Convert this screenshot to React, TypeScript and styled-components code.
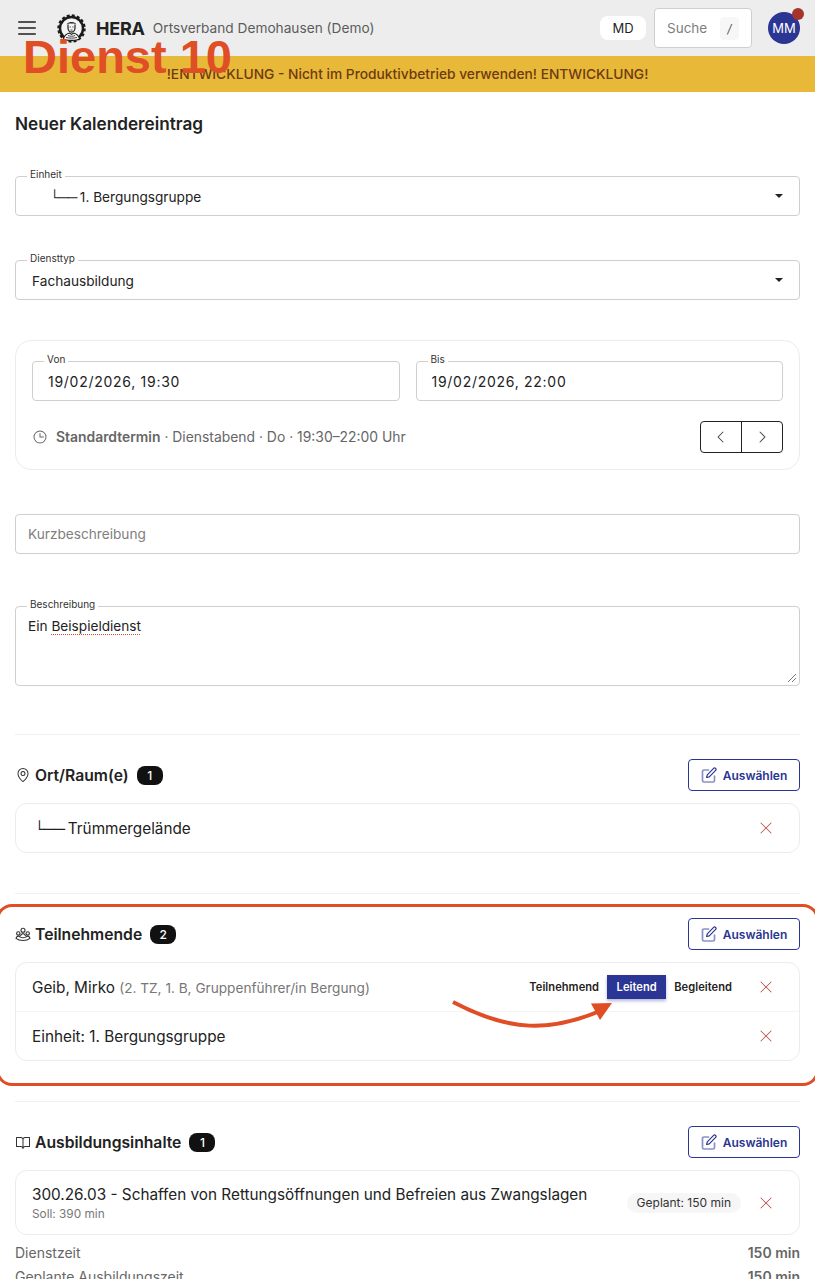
import React from "react";
import styled, { createGlobalStyle } from "styled-components";
import { PiList, PiClock, PiCaretLeft, PiCaretRight, PiMapPin, PiBookOpen, PiXLight } from "react-icons/pi";

const Global = createGlobalStyle`
  html, body { margin: 0; padding: 0; background: #fff; }
  body { font-family: Inter, "Liberation Sans", sans-serif; color: #1f1f1f; overflow: hidden; -webkit-font-smoothing: antialiased; }
  * { box-sizing: border-box; }
`;

const Page = styled.div`
  position: relative;
  width: 815px;
  height: 1279px;
  overflow: hidden;
`;
const Header = styled.header`
  height: 56px;
  background: #ededed;
  display: flex;
  align-items: center;
  padding: 0 15px;
`;
const MenuButton = styled.div`
  width: 24px;
  height: 24px;
  display: flex;
  color: #1f1f1f;
  margin-right: 18px;
`;
const Brand = styled.div`
  font-size: 18px;
  font-weight: 700;
  color: #222;
  margin-left: 10px;
  letter-spacing: -0.2px;
`;
const OrgName = styled.div`
  font-size: 13.7px;
  color: #5c5c5c;
  margin-left: 8px;
  flex: 1;
`;
const ModePill = styled.div`
  width: 46px;
  height: 24px;
  background: #fff;
  border-radius: 8px;
  font-size: 13px;
  display: flex;
  align-items: center;
  justify-content: center;
  margin-right: 8px;
`;
const SearchBox = styled.div`
  width: 98px;
  height: 40px;
  background: #fff;
  border: 1px solid #cfcfcf;
  border-radius: 4px;
  display: flex;
  align-items: center;
  justify-content: space-between;
  padding: 0 12px;
  font-size: 13.5px;
  color: #808080;
  margin-right: 16px;
`;
const Kbd = styled.span`
  width: 19px;
  height: 23px;
  background: #f7f7f7;
  border-radius: 4px;
  display: flex;
  align-items: center;
  justify-content: center;
  font-size: 12px;
  font-style: italic;
  color: #555;
`;
const Avatar = styled.div`
  position: relative;
  width: 32px;
  height: 32px;
  border-radius: 50%;
  background: #2b3593;
  color: #fff;
  font-size: 13px;
  display: flex;
  align-items: center;
  justify-content: center;
`;
const AvatarDot = styled.span`
  position: absolute;
  top: -4px;
  right: -4px;
  width: 12px;
  height: 12px;
  border-radius: 50%;
  background: #a5352a;
`;
const Banner = styled.div`
  height: 36px;
  background: #e8b838;
  color: #6e3a12;
  font-size: 13.78px;
  font-weight: 500;
  display: flex;
  align-items: center;
  justify-content: center;
`;
const Main = styled.main`
  padding: 0 15px;
`;
const PageTitle = styled.h1`
  margin: 21px 0 0;
  height: 22px;
  line-height: 22px;
  font-size: 17.2px;
  font-weight: 600;
  color: #222;
`;
const Field = styled.div<{ $mt?: number; $h?: number }>`
  position: relative;
  flex: 1;
  margin-top: ${(p) => p.$mt ?? 0}px;
  height: ${(p) => p.$h ?? 40}px;
  border: 1px solid #cfcfcf;
  border-radius: 4px;
  background: #fff;
  display: flex;
  align-items: center;
  font-size: 13.65px;
  color: #222;
  padding: 0 12px;
`;
const FieldLabel = styled.label`
  position: absolute;
  top: -10px;
  left: 11px;
  background: #fff;
  padding: 0 3px;
  font-size: 10px;
  line-height: 14px;
  color: #333;
`;
const SelectValue = styled.span`
  flex: 1;
  padding: 1px 0 0 4px;
`;
const Branch = styled.span<{ $ml?: number }>`
  margin-left: ${(p) => p.$ml ?? 0}px;
  letter-spacing: -0.75px;
`;
const Caret = styled.span`
  width: 0;
  height: 0;
  border-left: 4px solid transparent;
  border-right: 4px solid transparent;
  border-top: 4px solid #222;
  margin-right: 4px;
`;
const Placeholder = styled.span`
  color: #808080;
`;
const DateCard = styled.section`
  margin-top: 40px;
  height: 130px;
  border: 1px solid #ececec;
  border-radius: 16px;
  padding: 20px 16px 0;
`;
const DateRow = styled.div`
  display: flex;
  gap: 16px;
`;
const DateValue = styled.span`
  font-size: 14px;
  letter-spacing: 0.72px;
  padding-left: 3px;
  color: #222;
`;
const HintRow = styled.div`
  display: flex;
  align-items: center;
  margin-top: 20px;
  height: 32px;
  font-size: 13.9px;
  color: #666;
`;
const HintIcon = styled.span`
  display: flex;
  margin-right: 8px;
  color: #666;
`;
const HintText = styled.span`
  flex: 1;
  b { font-weight: 600; }
`;
const StepGroup = styled.div`
  display: flex;
  width: 83px;
  height: 32px;
  border: 1px solid #222;
  border-radius: 4px;
`;
const StepButton = styled.div`
  flex: 1;
  display: flex;
  align-items: center;
  justify-content: center;
  color: #444;
  & + & { border-left: 1px solid #222; }
`;
const Spelled = styled.span`
  text-decoration: underline dotted #e0473a 1px;
  text-underline-offset: 3px;
`;
const TextAreaBody = styled.div`
  align-self: flex-start;
  padding-top: 11px;
`;
const Grip = styled.svg`
  position: absolute;
  right: 2px;
  bottom: 2px;
`;
const Divider = styled.hr<{ $mt: number }>`
  border: 0;
  border-top: 1px solid #f0f0f0;
  margin: ${(p) => p.$mt}px 0 0;
`;
const SectionHead = styled.div`
  display: flex;
  align-items: center;
  height: 32px;
  margin-top: 24px;
  margin-bottom: 12px;
`;
const SectionIcon = styled.span`
  display: flex;
  width: 20px;
  color: #333;
`;
const SectionTitle = styled.h2`
  margin: 0;
  font-size: 15.7px;
  font-weight: 600;
  color: #222;
`;
const Badge = styled.span`
  margin-left: 8px;
  width: 26px;
  height: 19px;
  border-radius: 8px;
  background: #111;
  color: #fff;
  font-size: 12px;
  font-weight: 500;
  display: flex;
  align-items: center;
  justify-content: center;
`;
const PickButton = styled.div`
  margin-left: auto;
  width: 112px;
  height: 32px;
  border: 1px solid #2b3593;
  border-radius: 4px;
  display: flex;
  align-items: center;
  justify-content: center;
  gap: 6px;
  color: #2b3593;
  font-size: 12px;
  font-weight: 600;
`;
const ListCard = styled.div`
  border: 1px solid #ececec;
  border-radius: 12px;
`;
const ListRow = styled.div<{ $h: number }>`
  display: flex;
  align-items: center;
  height: ${(p) => p.$h}px;
  padding: 0 24px 0 16px;
  font-size: 15.3px;
  color: #222;
  & + & { border-top: 1px solid #f4f4f4; }
`;
const RowText = styled.div`
  flex: 1;
  min-width: 0;
`;
const Muted = styled.span`
  font-size: 13.65px;
  color: #777;
`;
const Sub = styled.div`
  font-size: 11.8px;
  color: #777;
  margin-top: 3px;
`;
const Segments = styled.div`
  display: flex;
  gap: 8px;
  margin-right: 25px;
`;
const Segment = styled.span<{ $active?: boolean }>`
  height: 24px;
  display: flex;
  align-items: center;
  padding: 0 ${(p) => (p.$active ? 9.5 : 0)}px;
  font-size: 11.1px;
  font-weight: 600;
  letter-spacing: 0.05px;
  color: ${(p) => (p.$active ? "#fff" : "#222")};
  background: ${(p) => (p.$active ? "#2b3593" : "transparent")};
  box-shadow: ${(p) => (p.$active ? "0 2px 3px rgba(43,53,147,.35)" : "none")};
`;
const Planned = styled.span`
  height: 20px;
  padding: 0 10px;
  border-radius: 10px;
  background: #f6f6f6;
  font-size: 12px;
  color: #333;
  display: flex;
  align-items: center;
  margin-right: 16px;
`;
const Remove = styled.span`
  display: flex;
  color: #b5483f;
`;
const Stat = styled.div<{ $mt: number }>`
  display: flex;
  justify-content: space-between;
  font-size: 14px;
  line-height: 17px;
  color: #666;
  margin-top: ${(p) => p.$mt}px;
  b { font-weight: 600; color: #666; }
`;
const Stamp = styled.div`
  position: absolute;
  left: 23px;
  top: 30px;
  font-family: "Liberation Sans", Arial, sans-serif;
  font-weight: 700;
  font-size: 47px;
  line-height: 54px;
  color: #e04e25;
  pointer-events: none;
`;
const Frame = styled.div`
  position: absolute;
  left: -4px;
  top: 904px;
  width: 823px;
  height: 182px;
  border: 3.5px solid #e04e25;
  border-radius: 16px;
  pointer-events: none;
`;
const ArrowSvg = styled.svg`
  position: absolute;
  left: 440px;
  top: 990px;
`;

const Logo = () => (
  <svg width="29" height="29" viewBox="0 0 29 29" fill="none">
    <circle cx="14.5" cy="14.5" r="11.5" stroke="#1b1b1b" strokeWidth="2.4" />
    <circle cx="14.5" cy="14.5" r="13" stroke="#1b1b1b" strokeWidth="2.4" strokeDasharray="2.9 2.2" />
    <circle cx="14.5" cy="14.5" r="9.6" fill="#f4f4f4" />
    <path d="M9.6 10.5c.8-3.4 9-3.4 9.8 0-.9-.6-1.8-.9-2.6-1h-4.6c-.8.1-1.7.4-2.6 1z" fill="#1b1b1b" />
    <path d="M11 10.5v3.6c0 2.3 1.7 4 3.5 4s3.5-1.7 3.5-4v-3.6" stroke="#1b1b1b" strokeWidth="1.2" />
    <path d="M12.6 13h1.2M15.3 13h1.2M13.5 16h2" stroke="#1b1b1b" strokeWidth=".8" />
    <path d="M6.5 25c.8-3.8 3.6-5.4 6-6l2 1.4 2-1.4c2.4.6 5.2 2.2 6 6-2.6 1.8-13.4 1.8-16 0z" fill="#f4f4f4" stroke="#1b1b1b" strokeWidth="1.1" />
    <path d="M9 23.4c3 1 8 1 11 0M11 21.5c2 1 5 1 7 0" stroke="#1b1b1b" strokeWidth=".8" />
  </svg>
);

const EditIcon = () => (
  <svg width="16" height="16" viewBox="0 0 16 16" fill="none" stroke="currentColor" strokeLinecap="round" strokeLinejoin="round">
    <path d="M7.5 3H3a1.500 1.500 0 0 0-1.500 1.500v9A1.500 1.500 0 0 0 3 15h9a1.500 1.500 0 0 0 1.500-1.500V9" strokeWidth="1.7" strokeOpacity=".55" />
    <path d="M12.600 1.400a1.400 1.400 0 0 1 2 2L8.300 9.800l-2.700.7.700-2.700z" strokeWidth="1.2" />
  </svg>
);

const GroupIcon = () => (
  <svg width="16" height="16" viewBox="0 0 16 16" fill="none" stroke="currentColor" strokeWidth="1.1">
    <circle cx="8" cy="4.3" r="2" />
    <circle cx="3.3" cy="7.4" r="1.7" />
    <circle cx="12.7" cy="7.4" r="1.7" />
    <path d="M5.400 10c.5-1.600 1.500-2.400 2.600-2.400s2.100.8 2.600 2.400" />
    <path d="M1 12.300c.3-1.300 1.200-2.200 2.300-2.200.8 0 1.500.3 2 1 .8.500 1.700.7 2.700.7s1.900-.2 2.700-.7c.5-.7 1.200-1 2-1 1.100 0 2 .9 2.300 2.200-1.500 1.300-4 2.200-7 2.200s-5.500-.9-7-2.200z" />
  </svg>
);

const Section = ({ icon, title, count }: { icon: React.ReactNode; title: string; count: number }) => (
  <SectionHead>
    <SectionIcon>{icon}</SectionIcon>
    <SectionTitle>{title}</SectionTitle>
    <Badge>{count}</Badge>
    <PickButton><EditIcon />Auswählen</PickButton>
  </SectionHead>
);

const Close = () => (
  <Remove><PiXLight size={18} /></Remove>
);

export default function App() {
  return (
    <Page>
      <Global />
      <Header>
        <MenuButton><PiList size={24} /></MenuButton>
        <Logo />
        <Brand>HERA</Brand>
        <OrgName>Ortsverband Demohausen (Demo)</OrgName>
        <ModePill>MD</ModePill>
        <SearchBox>Suche<Kbd>/</Kbd></SearchBox>
        <Avatar>MM<AvatarDot /></Avatar>
      </Header>
      <Banner>!ENTWICKLUNG - Nicht im Produktivbetrieb verwenden! ENTWICKLUNG!</Banner>
      <Main>
        <PageTitle>Neuer Kalendereintrag</PageTitle>
        <Field $mt={41}>
          <FieldLabel>Einheit</FieldLabel>
          <SelectValue><Branch $ml={18}>└── </Branch>1. Bergungsgruppe</SelectValue>
          <Caret />
        </Field>
        <Field $mt={44}>
          <FieldLabel>Diensttyp</FieldLabel>
          <SelectValue>Fachausbildung</SelectValue>
          <Caret />
        </Field>
        <DateCard>
          <DateRow>
            <Field>
              <FieldLabel>Von</FieldLabel>
              <DateValue>19/02/2026, 19:30</DateValue>
            </Field>
            <Field>
              <FieldLabel>Bis</FieldLabel>
              <DateValue>19/02/2026, 22:00</DateValue>
            </Field>
          </DateRow>
          <HintRow>
            <HintIcon><PiClock size={16} /></HintIcon>
            <HintText><b>Standardtermin</b> · Dienstabend · Do · 19:30–22:00 Uhr</HintText>
            <StepGroup>
              <StepButton><PiCaretLeft size={16} /></StepButton>
              <StepButton><PiCaretRight size={16} /></StepButton>
            </StepGroup>
          </HintRow>
        </DateCard>
        <Field $mt={44}>
          <Placeholder>Kurzbeschreibung</Placeholder>
        </Field>
        <Field $mt={52} $h={80}>
          <FieldLabel>Beschreibung</FieldLabel>
          <TextAreaBody>Ein <Spelled>Beispieldienst</Spelled></TextAreaBody>
          <Grip width="10" height="10" viewBox="0 0 10 10" stroke="#777" strokeWidth="1">
            <path d="M1 9 9 1M5 9 9 5" />
          </Grip>
        </Field>
        <Divider $mt={48} />
        <Section icon={<PiMapPin size={16} />} title="Ort/Raum(e)" count={1} />
        <ListCard>
          <ListRow $h={48}>
            <RowText><Branch $ml={2}>└── </Branch>Trümmergelände</RowText>
            <Close />
          </ListRow>
        </ListCard>
        <Divider $mt={40} />
        <Section icon={<GroupIcon />} title="Teilnehmende" count={2} />
        <ListCard>
          <ListRow $h={48}>
            <RowText>Geib, Mirko <Muted>(2. TZ, 1. B, Gruppenführer/in Bergung)</Muted></RowText>
            <Segments>
              <Segment>Teilnehmend</Segment>
              <Segment $active>Leitend</Segment>
              <Segment>Begleitend</Segment>
            </Segments>
            <Close />
          </ListRow>
          <ListRow $h={49}>
            <RowText>Einheit: 1. Bergungsgruppe</RowText>
            <Close />
          </ListRow>
        </ListCard>
        <Divider $mt={40} />
        <Section icon={<PiBookOpen size={16} />} title="Ausbildungsinhalte" count={1} />
        <ListCard>
          <ListRow $h={63}>
            <RowText>
              300.26.03 - Schaffen von Rettungsöffnungen und Befreien aus Zwangslagen
              <Sub>Soll: 390 min</Sub>
            </RowText>
            <Planned>Geplant: 150 min</Planned>
            <Close />
          </ListRow>
        </ListCard>
        <Stat $mt={9}><span>Dienstzeit</span><b>150 min</b></Stat>
        <Stat $mt={7}><span>Geplante Ausbildungszeit</span><b>150 min</b></Stat>
      </Main>
      <Stamp>Dienst 10</Stamp>
      <Frame />
      <ArrowSvg width="190" height="50" viewBox="0 0 190 50" fill="none">
        <path d="M13 12C70 42 110 42 160 21" stroke="#e04e25" strokeWidth="4" />
        <path d="M172 13 151 13.5 160 30z" fill="#e04e25" />
      </ArrowSvg>
    </Page>
  );
}
